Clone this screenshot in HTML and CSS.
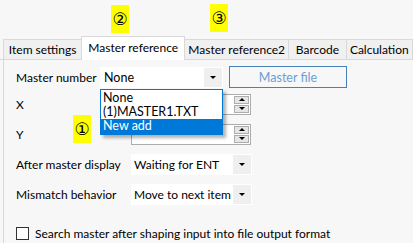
FILE: index.html
```html
<!DOCTYPE html>
<html lang="en">
<head>
    <meta charset="UTF-8">
    <title>Master reference</title>
    <link rel="stylesheet" href="styles.css">
</head>
<body>
    <div class="window">
        <!-- annotation badges -->
        <span class="badge badge-2">②</span>
        <span class="badge badge-3">③</span>
        <span class="badge badge-1">①</span>

        <div class="tabs">
            <div class="tab">Item settings</div>
            <div class="tab active">Master reference</div>
            <div class="tab">Master reference2</div>
            <div class="tab">Barcode</div>
            <div class="tab">Calculation</div>
        </div>

        <div class="panel">
            <div class="row row-first">
                <span class="label label-short">Master number</span>
                <div class="combo combo-master">
                    <span class="combo-text">None</span>
                    <span class="combo-arrow"><span class="tri-down"></span></span>
                    <ul class="list">
                        <li>None</li>
                        <li>(1)MASTER1.TXT</li>
                        <li class="selected">New add</li>
                    </ul>
                </div>
                <button class="btn" disabled>Master file</button>
            </div>

            <div class="row row-spin1">
                <span class="label">X</span>
                <div class="spin">
                    <span class="spin-text"></span>
                    <span class="spin-btns">
                        <span class="spin-btn"><span class="tri-up"></span></span>
                        <span class="spin-btn"><span class="tri-down"></span></span>
                    </span>
                </div>
            </div>

            <div class="row">
                <span class="label">Y</span>
                <div class="spin">
                    <span class="spin-text"></span>
                    <span class="spin-btns">
                        <span class="spin-btn"><span class="tri-up"></span></span>
                        <span class="spin-btn"><span class="tri-down"></span></span>
                    </span>
                </div>
            </div>

            <div class="row">
                <span class="label">After master display</span>
                <div class="combo combo-wide">
                    <span class="combo-text">Waiting for ENT</span>
                    <span class="combo-arrow"><span class="tri-down"></span></span>
                </div>
            </div>

            <div class="row">
                <span class="label">Mismatch behavior</span>
                <div class="combo combo-wide">
                    <span class="combo-text">Move to next item</span>
                    <span class="combo-arrow"><span class="tri-down"></span></span>
                </div>
            </div>

            <label class="check-row">
                <span class="checkbox"></span>
                Search master after shaping input into file output format
            </label>
        </div>
    </div>
</body>
</html>
```

FILE: styles.css
```css
body {
    margin: 0;
    background-color: #f7f7f7;
    font-family: Lato, "Noto Sans", sans-serif;
    font-size: 12px;
    color: #000;
}

.window {
    position: relative;
    width: 413px;
    height: 243px;
    overflow: hidden;
    padding-top: 36px;
    box-sizing: border-box;
}

.badge {
    position: absolute;
    background-color: #ffff00;
    font-family: "DejaVu Sans", sans-serif;
    font-size: 17px;
    line-height: 28px;
    width: 18px;
    text-align: center;
    color: #000;
}

.badge-2 {
    left: 111px;
    top: 5px;
}

.badge-3 {
    left: 210px;
    top: 4px;
}

.badge-1 {
    left: 73px;
    top: 115px;
}

.tabs {
    display: flex;
    align-items: flex-end;
    height: 23px;
    padding-left: 3px;
    border-bottom: 1px solid #d9d9d9;
}

.tab {
    height: 20px;
    line-height: 19px;
    background-color: #f0f0f0;
    border: 1px solid #d9d9d9;
    border-bottom: none;
    margin-left: -1px;
    box-sizing: border-box;
    white-space: nowrap;
    text-align: center;
}

.tab:first-child {
    margin-left: 0;
    width: 80px;
}

.tab.active {
    height: 24px;
    margin-bottom: -1px;
    line-height: 21px;
    background-color: #fff;
    width: 105px;
    position: relative;
}

.tab:nth-child(3) {
    width: 106px;
}

.tab:nth-child(4) {
    width: 59px;
}

.tab:nth-child(5) {
    width: 68px;
}

.panel {
    margin-left: 3px;
    border-left: 1px solid #d9d9d9;
    padding: 6px 0 0 12px;
    height: 200px;
}

.row {
    display: flex;
    align-items: center;
    height: 22px;
    margin-top: 8px;
}

.row-first {
    margin-top: 0;
}

.row-spin1 {
    margin-top: 5px;
}

.label {
    width: 115px;
    flex-shrink: 0;
    white-space: nowrap;
}

.label-short {
    width: 84px;
}

.combo {
    position: relative;
    display: flex;
    height: 21px;
    background-color: #fff;
}

.combo-master {
    width: 123px;
}

.combo-wide {
    width: 121px;
}

.combo-text {
    flex: 1;
    padding-left: 4px;
    line-height: 21px;
    font-size: 12.5px;
    white-space: nowrap;
    overflow: hidden;
}

.combo-wide .combo-text {
    font-size: 12px;
    padding-left: 3px;
}

.combo-arrow {
    width: 18px;
    margin: 1px;
    background-color: #efefef;
    display: flex;
    align-items: center;
    justify-content: center;
}

.tri-down {
    width: 0;
    height: 0;
    border-left: 3px solid transparent;
    border-right: 3px solid transparent;
    border-top: 3px solid #000;
}

.tri-up {
    width: 0;
    height: 0;
    border-left: 3px solid transparent;
    border-right: 3px solid transparent;
    border-bottom: 3px solid #000;
}

.list {
    position: absolute;
    left: 0;
    top: 22px;
    width: 123px;
    margin: 0;
    padding: 1px 0 0;
    list-style: none;
    background-color: #fff;
    border: 1px solid #0078d7;
    box-sizing: border-box;
    box-shadow: 3px 3px 3px rgba(0, 0, 0, 0.3);
    z-index: 2;
    font-size: 12.5px;
}

.list li {
    height: 14px;
    line-height: 14px;
    padding-left: 2px;
}

.list li.selected {
    height: 15px;
    background-color: #0078d7;
    color: #fff;
}

.btn {
    margin-left: 6px;
    width: 118px;
    height: 22px;
    background-color: #f7f7f7;
    border: 1px solid #4a80b8;
    color: #6d9ed3;
    font-family: inherit;
    font-size: 12.5px;
    padding: 0;
}

.spin {
    display: flex;
    width: 120px;
    height: 21px;
    background-color: #fff;
    border: 1px solid #adadad;
    box-sizing: border-box;
}

.spin-text {
    flex: 1;
}

.spin-btns {
    display: flex;
    flex-direction: column;
    gap: 1px;
    width: 15px;
    padding: 1px 1px 1px 0;
}

.spin-btn {
    flex: 1;
    background-color: #e5e5e5;
    border: 1px solid #adadad;
    display: flex;
    align-items: center;
    justify-content: center;
}

.check-row {
    display: flex;
    align-items: center;
    margin-top: 21px;
}

.checkbox {
    width: 11px;
    height: 11px;
    border: 1px solid #333;
    background-color: #fff;
    margin-right: 6px;
}
```
